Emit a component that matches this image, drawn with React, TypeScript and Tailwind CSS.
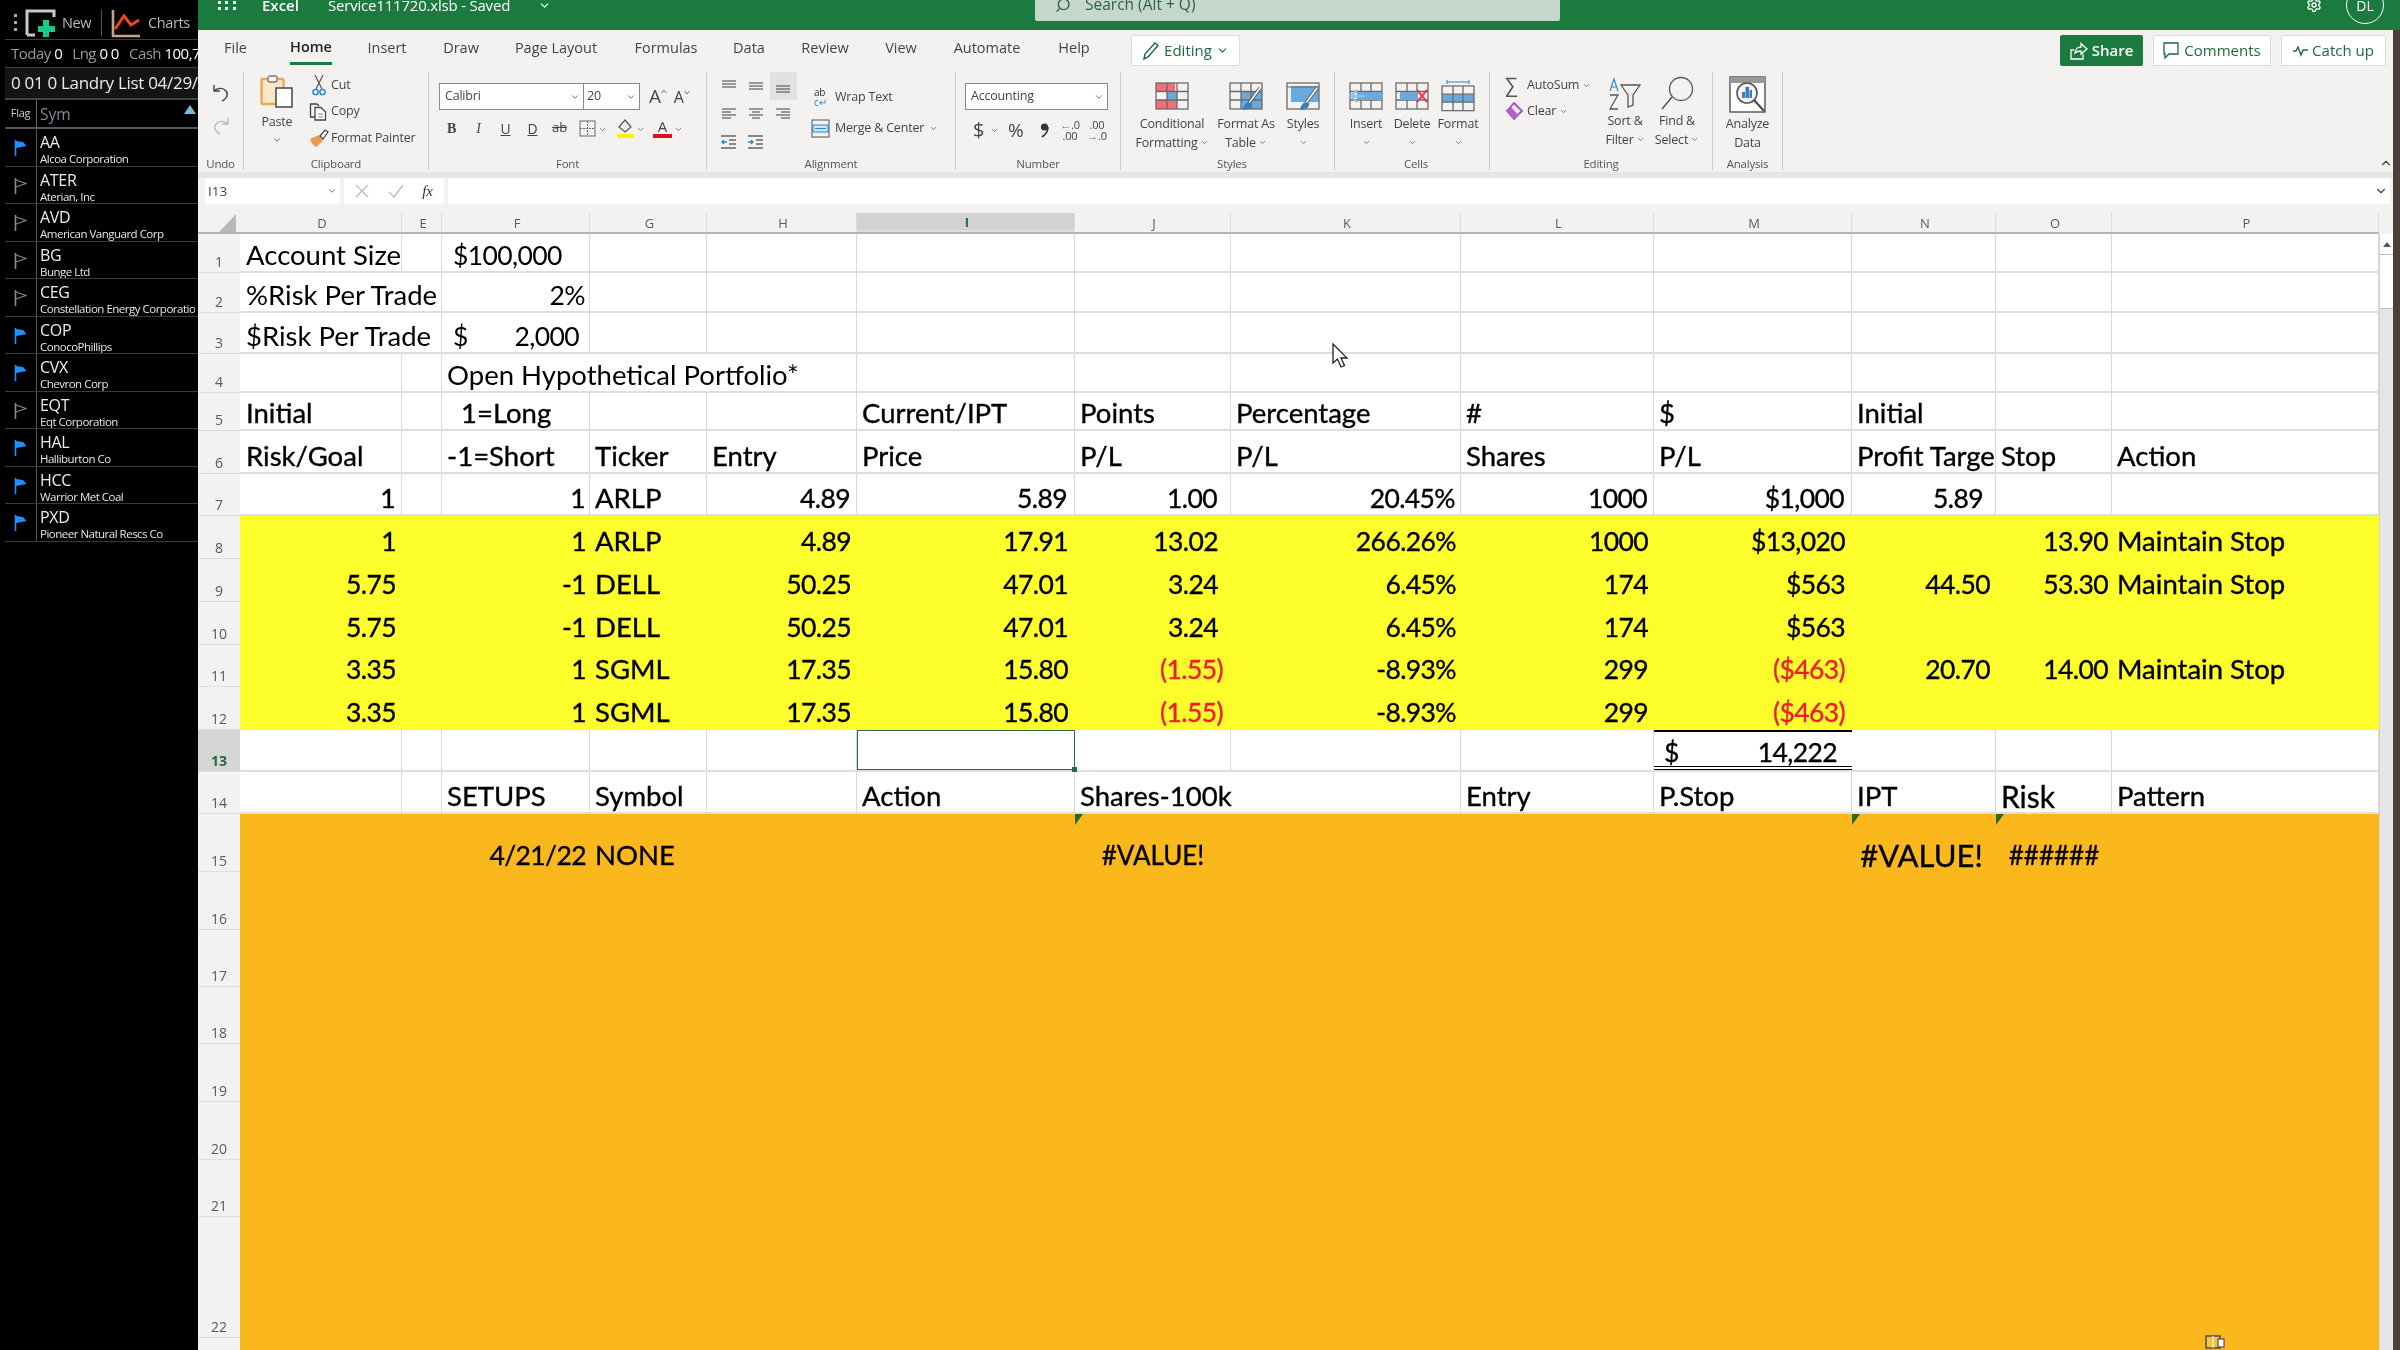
import React from "react";
import { ChevronDown, ChevronUp, Search, Settings } from "lucide-react";

const GRID = "grid grid-cols-[162px_40px_148px_117px_150px_218px_156px_230px_193px_198px_144px_116px_267px]";
const LETTERS = ["D", "E", "F", "G", "H", "I", "J", "K", "L", "M", "N", "O", "P"];
const RPAD = ["pr-[6px]", "pr-[4px]", "pr-[4px]", "pr-[4px]", "pr-[6px]", "pr-[7px]", "pr-[13px]", "pr-[5px]", "pr-[6px]", "pr-[7px]", "pr-[6px]", "pr-[4px]", "pr-[4px]"];

type Row = { n: number; h: string; bg: string; cells: React.ReactNode[]; open?: number[]; bold?: boolean; line?: boolean };

const Chev = ({ s = 10, c = "text-[#555]" }: { s?: number; c?: string }) => <ChevronDown size={s} strokeWidth={2} className={`inline-block shrink-0 ${c}`} />;

const NUM = "text-[26.5px] tracking-[-0.6px]";

const rows: Row[] = [
  { n: 1, h: "h-[39px]", bg: "bg-white", line: true, cells: ["Account Size", "", <span className={`ml-[6px] ${NUM}`}>$100,000</span>] },
  { n: 2, h: "h-[40px]", bg: "bg-white", line: true, open: [0], cells: ["%Risk Per Trade", "", "r:2%"] },
  { n: 3, h: "h-[41px]", bg: "bg-white", line: true, open: [0], cells: ["$Risk Per Trade", "", <span className={`flex justify-between w-[126px] ml-[6px] ${NUM}`}><span>$</span><span>2,000</span></span>] },
  { n: 4, h: "h-[39px]", bg: "bg-white", line: true, open: [2, 3], cells: ["", "", "Open Hypothetical Portfolio*"] },
  { n: 5, h: "h-[38px]", bg: "bg-white", bold: true, line: true, cells: ["Initial", "", <span className="ml-[14px]">1=Long</span>, "", "", "Current/IPT", "Points", "Percentage", "#", "$", "Initial"] },
  { n: 6, h: "h-[43px]", bg: "bg-white", bold: true, line: true, cells: ["Risk/Goal", "", "-1=Short", "Ticker", "Entry", "Price", "P/L", "P/L", "Shares", "P/L", <span className="block w-[139px] overflow-hidden">Profit Target</span>, "Stop", "Action"] },
  { n: 7, h: "h-[42px]", bg: "bg-white", bold: true, line: true, cells: ["r:1", "", "r:1", "ARLP", "r:4.89", "r:5.89", "r:1.00", "r:20.45%", "r:1000", "r:$1,000", <span className={`block w-full text-right pr-[12px] ${NUM}`}>5.89</span>] },
  { n: 8, h: "h-[43px]", bg: "bg-[#fdfd2b]", bold: true, cells: ["r:1", "", "r:1", "ARLP", "r:4.89", "r:17.91", "r:13.02", "r:266.26%", "r:1000", "r:$13,020", "", "r:13.90", "Maintain Stop"] },
  { n: 9, h: "h-[43px]", bg: "bg-[#fdfd2b]", bold: true, cells: ["r:5.75", "", "r:-1", "DELL", "r:50.25", "r:47.01", "r:3.24", "r:6.45%", "r:174", "r:$563", "r:44.50", "r:53.30", "Maintain Stop"] },
  { n: 10, h: "h-[43px]", bg: "bg-[#fdfd2b]", bold: true, cells: ["r:5.75", "", "r:-1", "DELL", "r:50.25", "r:47.01", "r:3.24", "r:6.45%", "r:174", "r:$563"] },
  { n: 11, h: "h-[42px]", bg: "bg-[#fdfd2b]", bold: true, cells: ["r:3.35", "", "r:1", "SGML", "r:17.35", "r:15.80", "r:(1.55)", "r:-8.93%", "r:299", "r:($463)", "r:20.70", "r:14.00", "Maintain Stop"] },
  { n: 12, h: "h-[43px]", bg: "bg-[#fdfd2b]", bold: true, cells: ["r:3.35", "", "r:1", "SGML", "r:17.35", "r:15.80", "r:(1.55)", "r:-8.93%", "r:299", "r:($463)"] },
  { n: 13, h: "h-[42px]", bg: "bg-white", bold: true, line: true, cells: [] },
  { n: 14, h: "h-[42px]", bg: "bg-white", bold: true, line: true, open: [6], cells: ["", "", "SETUPS", "Symbol", "", "Action", "Shares-100k", "", "Entry", "P.Stop", "IPT", <span className="text-[30px]">Risk</span>, "Pattern"] },
  { n: 15, h: "h-[58px]", bg: "bg-[#fbb81c]", bold: true, cells: ["", "", "r:4/21/22", "NONE", "", "", "c:#VALUE!", "", "", "", <span className="w-full text-center text-[31px] -ml-[5px]">#VALUE!</span>, "c:######"] },
  { n: 16, h: "h-[58px]", bg: "bg-[#fbb81c]", cells: [] },
  { n: 17, h: "h-[57px]", bg: "bg-[#fbb81c]", cells: [] },
  { n: 18, h: "h-[57px]", bg: "bg-[#fbb81c]", cells: [] },
  { n: 19, h: "h-[58px]", bg: "bg-[#fbb81c]", cells: [] },
  { n: 20, h: "h-[58px]", bg: "bg-[#fbb81c]", cells: [] },
  { n: 21, h: "h-[57px]", bg: "bg-[#fbb81c]", cells: [] },
  { n: 22, h: "h-[121px]", bg: "bg-[#fbb81c]", cells: [] },
  { n: 23, h: "h-[60px]", bg: "bg-[#fbb81c]", cells: [] },
];

function Cell({ v, i, row }: { v: React.ReactNode; i: number; row: Row }) {
  const open = row.open?.includes(i);
  const rule = row.line && !open ? "border-r border-[#d9d9d9]" : "";
  const tri = row.n === 15 && (i === 6 || i === 10 || i === 11);
  const pb = row.line ? "pb-0" : row.n === 15 ? "pb-[1px]" : "pb-[2px]";
  let inner: React.ReactNode = v;
  let align = i === 0 ? "justify-start pl-[6px]" : "justify-start pl-[5px]";
  let color = "text-black";
  if (typeof v === "string") {
    if (v.startsWith("r:")) {
      inner = <span className={NUM}>{v.slice(2)}</span>;
      let pad = RPAD[i];
      if (v.includes("(")) {
        color = "text-[#ee1c25]";
        if (i === 6) pad = "pr-[8px]";
      }
      align = `justify-end ${pad}`;
    } else if (v.startsWith("c:")) {
      inner = <span className="text-[26px]">{v.slice(2)}</span>;
      align = "justify-center";
    }
  }
  if (row.n === 13 && i === 5) {
    return <div className="relative border border-[#2c6b4a] bg-white"><span className="absolute -right-[3px] -bottom-[3px] w-[5px] h-[5px] bg-[#2c6b4a]" /></div>;
  }
  if (row.n === 13 && i === 9) {
    return <div className={`flex items-end justify-between pl-[10px] pr-[15px] border-t-2 border-b-[4px] border-double border-black border-t-black whitespace-nowrap leading-[28px] ${NUM}`}><span>$</span><span>14,222</span></div>;
  }
  return (
    <div className={`relative flex items-end ${pb} whitespace-nowrap ${align} ${rule} ${color}`}>
      {tri && <svg className="absolute left-0 top-0" width="8" height="11" viewBox="0 0 8 11"><path d="M0 0H8L0 11Z" fill="#2b6a1e" /></svg>}
      {inner}
    </div>
  );
}

function SheetRow({ row }: { row: Row }) {
  const cells = Array.from({ length: 13 }, (_, i) => row.cells[i] ?? "");
  const stroke = row.bold ? "[-webkit-text-stroke:0.35px_currentColor]" : "";
  return (
    <div className={`flex ${row.h}`}>
      <div className={`w-[42px] shrink-0 flex items-end justify-center pb-0 border-b border-[#dedede] text-[14px] font-['Open_Sans',sans-serif] ${row.n === 13 ? "bg-[#d6d6d6] font-bold text-[#1f6b3e]" : "bg-[#f3f2f1] text-[#5a5a5a]"}`}>{row.n}</div>
      <div className={`${GRID} w-[2139px] ${row.bg} ${stroke} ${row.line ? "border-b-2 border-[#dedede]" : ""} font-['Lato',sans-serif] text-[27.5px] leading-[32px]`}>
        {cells.map((v, i) => <Cell key={i} v={v} i={i} row={row} />)}
      </div>
    </div>
  );
}

const Tile = ({ children, w = 34, h = 28 }: { children?: React.ReactNode; w?: number; h?: number }) => (
  <svg width={w} height={h} viewBox={`0 0 34 ${h}`} fill="none">{children}</svg>
);
const GridLines = () => (
  <g stroke="#6a6a6a" strokeWidth="1.3" fill="none">
    <rect x="1" y="1" width="32" height="26" />
    <path d="M12 1V27M22 1V27M1 9.5H33M1 18H33" />
  </g>
);
const Brush = () => (
  <g>
    <path d="M31 6 L20 21" stroke="#555" strokeWidth="3.4" />
    <path d="M31 6 L20 21" stroke="#fff" strokeWidth="1.6" />
    <path d="M14 28 C15 21 19 19 23 21 C24 25 20 28 14 28Z" fill="#3a7fbd" />
  </g>
);

function Clipboard() {
  return (
    <svg width="34" height="34" viewBox="0 0 34 34" fill="none">
      <rect x="1.5" y="5" width="22" height="25" rx="1" stroke="#e8a85a" strokeWidth="2.4" fill="#fbe6c8" />
      <rect x="8" y="2" width="9" height="6" rx="2" stroke="#777" strokeWidth="1.3" fill="#fff" />
      <rect x="16" y="14" width="16" height="19" fill="#fff" stroke="#444" strokeWidth="1.5" />
    </svg>
  );
}
const Scissors = () => (
  <svg width="14" height="22" viewBox="0 0 14 22" fill="none">
    <path d="M3 1 L10 15M11 1 L4 15" stroke="#555" strokeWidth="1.2" />
    <circle cx="3.5" cy="18" r="2.6" stroke="#2f86c9" strokeWidth="1.5" />
    <circle cx="10.5" cy="18" r="2.6" stroke="#2f86c9" strokeWidth="1.5" />
  </svg>
);
const CopyIcon = () => (
  <svg width="18" height="18" viewBox="0 0 18 18" fill="none">
    <path d="M9 14H1.5V1H8L10 3" stroke="#444" strokeWidth="1.3" />
    <path d="M6 4.5H12L16.5 9V17H6Z" stroke="#444" strokeWidth="1.3" fill="#fff" />
    <path d="M9 11H14M9 14H14" stroke="#888" />
  </svg>
);
const PainterIcon = () => (
  <svg width="20" height="20" viewBox="0 0 20 20" fill="none">
    <path d="M1 11 L10 7 L14 13 L7 19 C5 18 2 15 1 11Z" fill="#ec9a4e" />
    <path d="M11 8 L16 2 L19 4 L14 11Z" fill="#fff" stroke="#444" strokeWidth="1.2" />
  </svg>
);

function AlignI({ k }: { k: string }) {
  const sets: Record<string, [number, number, number][]> = {
    top: [[1, 15, 2], [1, 15, 5], [1, 15, 8]],
    mid: [[1, 15, 4], [1, 15, 7], [1, 15, 10]],
    bot: [[1, 15, 7], [1, 15, 10], [1, 15, 13]],
    l: [[1, 15, 2], [1, 10, 5], [1, 15, 8], [1, 10, 11]],
    c: [[1, 15, 2], [4, 12, 5], [1, 15, 8], [4, 12, 11]],
    r: [[1, 15, 2], [6, 15, 5], [1, 15, 8], [6, 15, 11]],
  };
  return (
    <svg width="16" height="15" viewBox="0 0 16 15" stroke="#666" strokeWidth="1.3">
      {sets[k].map(([a, b, y], i) => <path key={i} d={`M${a} ${y}H${b}`} />)}
    </svg>
  );
}
function IndentI({ dir }: { dir: number }) {
  return (
    <svg width="17" height="16" viewBox="0 0 17 16" fill="none">
      <path d="M1 2H16M9 6H16M9 10H16M1 14H16" stroke="#666" strokeWidth="1.3" />
      <path d={dir > 0 ? "M7 8H2M4 6L2 8L4 10" : "M1 8H6M4 6L6 8L4 10"} stroke="#2f86c9" strokeWidth="1.3" />
    </svg>
  );
}

function Big({ icon, lines, w, top = "pt-[6px]" }: { icon: React.ReactNode; lines: React.ReactNode[]; w: string; top?: string }) {
  return (
    <div className={`flex flex-col items-center ${w} ${top}`}>
      <div className="h-[36px] flex items-center justify-center">{icon}</div>
      {lines.map((l, i) => <div key={i} className="h-[19px] leading-[19px] whitespace-nowrap flex items-center gap-[2px]">{l}</div>)}
    </div>
  );
}

function Group({ cls, label, children }: { cls: string; label: string; children: React.ReactNode }) {
  return (
    <div className={`flex flex-col shrink-0 h-[98px] my-[2px] border-r border-[#cdcdcd] ${cls}`}>
      <div className="flex-1 flex min-h-0">{children}</div>
      <div className="h-[14px] leading-[16px] text-center text-[11.5px] text-[#555]">{label}</div>
    </div>
  );
}

const tabs: [string, string][] = [["File", "w-[75px]"], ["Home", "w-[76px]"], ["Insert", "w-[76px]"], ["Draw", "w-[72px]"], ["Page Layout", "w-[118px]"], ["Formulas", "w-[102px]"], ["Data", "w-[64px]"], ["Review", "w-[88px]"], ["View", "w-[64px]"], ["Automate", "w-[108px]"], ["Help", "w-[66px]"]];

const syms: [string, string, boolean][] = [
  ["AA", "Alcoa Corporation", true], ["ATER", "Aterian, Inc", false], ["AVD", "American Vanguard Corp", false], ["BG", "Bunge Ltd", false],
  ["CEG", "Constellation Energy Corporatio", false], ["COP", "ConocoPhillips", true], ["CVX", "Chevron Corp", true], ["EQT", "Eqt Corporation", false],
  ["HAL", "Halliburton Co", true], ["HCC", "Warrior Met Coal", true], ["PXD", "Pioneer Natural Rescs Co", true],
];

function Flag({ on }: { on: boolean }) {
  return (
    <svg width="13" height="18" viewBox="0 0 13 18" fill="none">
      <path d="M1.5 1V17" stroke={on ? "#1e90ff" : "#8a8a8a"} strokeWidth="1.6" />
      {on ? <path d="M2 2 L9 3 L12.5 7 L2 9Z" fill="#1e90ff" /> : <path d="M2 3 L12 6.5 L2 10" stroke="#8a8a8a" strokeWidth="1.2" />}
    </svg>
  );
}

function Sidebar() {
  return (
    <aside className="w-[198px] shrink-0 h-full bg-black text-white pl-[5px] font-['Open_Sans',sans-serif] overflow-hidden">
      <div className="h-[40px] flex items-center border-b border-[#3c3c3c] pt-[6px]">
        <div className="w-[20px] flex flex-col items-center gap-[4px]">
          <span className="w-[3px] h-[3px] bg-[#aaa]" /><span className="w-[3px] h-[3px] bg-[#aaa]" /><span className="w-[3px] h-[3px] bg-[#aaa]" />
        </div>
        <svg width="32" height="30" viewBox="0 0 32 30" fill="none">
          <path d="M2 27V3H29V9" stroke="#c9c9c9" strokeWidth="3" />
          <path d="M2 27H10" stroke="#c9c9c9" strokeWidth="3" />
          <path d="M21 12V29M13 21H30" stroke="#19c98a" strokeWidth="6" />
        </svg>
        <span className="ml-[5px] text-[14.5px] tracking-[-0.4px] text-[#b9b9b9]">New</span>
        <span className="ml-[10px] w-px h-[26px] bg-[#555]" />
        <svg className="ml-[9px]" width="30" height="30" viewBox="0 0 30 30" fill="none">
          <path d="M2 2V28H29" stroke="#c9a089" strokeWidth="2.6" />
          <path d="M4 21 L13 8 L20 17 L28 12" stroke="#e8481c" strokeWidth="3" />
        </svg>
        <span className="ml-[7px] text-[14.5px] tracking-[-0.4px] text-[#b9b9b9]">Charts</span>
      </div>
      <div className="h-[28px] flex items-center gap-[10px] pl-[6px] border-b border-[#3c3c3c] whitespace-nowrap text-[15px] tracking-[-0.5px] text-[#9a9a9a]">
        <span>Today <span className="text-white">0</span></span><span>Lng <span className="text-white">0 0</span></span><span>Cash <span className="text-white">100,7</span></span>
      </div>
      <div className="h-[32px] flex items-center pl-[6px] bg-[#141414] border-b-2 border-[#444] whitespace-nowrap text-[17px] tracking-[-0.3px] text-[#ececec]">0 01 0 Landry List 04/29/</div>
      <div className="relative flex h-[29px] border-b-2 border-[#555]">
        <div className="w-[32px] flex items-center justify-center border-r border-[#666] text-[11px] tracking-[-0.3px] text-[#ccc]">Flag</div>
        <div className="pl-[3px] leading-[29px] text-[15.5px] text-[#7f8d9c]">Sym</div>
        <svg className="absolute right-[2px] top-[5px]" width="12" height="9" viewBox="0 0 12 9"><path d="M6 0L12 9H0Z" fill="#7fb9d6" /></svg>
      </div>
      {syms.map(([s, n, on]) => (
        <div key={s} className="flex h-[37.5px] border-b border-[#3a3a3a]">
          <div className="w-[32px] flex items-center justify-center border-r border-[#555] pt-[2px]"><Flag on={on} /></div>
          <div className="pl-[3px] pt-[4px] whitespace-nowrap overflow-hidden">
            <div className="text-[16px] leading-[19px] tracking-[-0.3px] text-[#eee]">{s}</div>
            <div className="text-[11.5px] leading-[13px] tracking-[-0.5px] text-[#e6e6e6]">{n}</div>
          </div>
        </div>
      ))}
    </aside>
  );
}

function TitleBar() {
  return (
    <header className="h-[30px] bg-[#1b7a3e] overflow-hidden text-white font-['Open_Sans',sans-serif] text-[15px]">
      <div className="h-[10px] flex items-center overflow-visible">
        <div className="ml-[20px] grid grid-cols-3 gap-x-[4px] gap-y-[3px] w-[18px]">
          {Array.from({ length: 6 }, (_, i) => <span key={i} className="w-[3px] h-[3px] bg-white" />)}
        </div>
        <span className="ml-[26px] w-[40px] font-semibold">Excel</span>
        <span className="ml-[26px] w-[192px] whitespace-nowrap tracking-[-0.2px]">Service111720.xlsb - Saved</span>
        <ChevronDown size={13} className="ml-[18px]" />
        <div className="ml-[484px] w-[525px] h-[21px] self-start bg-[#c5d8cb] rounded-b-[2px] text-[#2f5f45] overflow-visible">
          <div className="h-[10px] flex items-center pl-[20px] gap-[14px] text-[15.5px]"><Search size={16} className="-scale-x-100" /><span>Search (Alt + Q)</span></div>
        </div>
        <Settings size={16} className="ml-[746px]" />
        <div className="ml-[24px] w-[38px] h-[38px] shrink-0 rounded-full border border-white flex items-center justify-center text-[14px]">DL</div>
      </div>
    </header>
  );
}

function Tabs() {
  return (
    <div className="h-[40px] flex items-start bg-[#f3f2f1] text-[14.5px] text-[#444]">
      {tabs.map(([t, w]) => (
        <div key={t} className={`${w} flex justify-center`}>
          <span className={`h-[35px] pt-[1px] flex items-center ${t === "Home" ? "border-b-[3px] border-[#1b7a3e] font-semibold text-[#222]" : ""}`}>{t}</span>
        </div>
      ))}
      <div className="ml-[24px] mt-[5px] w-[109px] h-[31px] flex items-center justify-center gap-[4px] bg-white border border-[#dcdcdc] rounded-[2px] text-[#1b6b3e] text-[15px]">
        <svg width="18" height="20" viewBox="0 0 18 20" fill="none"><path d="M2 18 L3 13 L13 2 L16 4.5 L6 16Z" stroke="#1b6b3e" strokeWidth="1.4" /></svg>
        Editing <Chev s={13} c="text-[#1b6b3e]" />
      </div>
      <div className="ml-auto mr-[7px] mt-[5px] flex gap-[10px] text-[15px] font-semibold text-[#1b6b3e]">
        <div className="w-[83px] h-[31px] flex items-center justify-center gap-[4px] bg-[#1b7a3e] rounded-[2px] text-white">
          <svg width="18" height="18" viewBox="0 0 18 18" fill="none" stroke="#fff" strokeWidth="1.3"><path d="M4 8H1V17H13V12" /><path d="M5 11 C5 7 8 5 11 5V1.5L17 7 L11 12V9C8 9 6 10 5 11Z" /></svg>
          Share
        </div>
        <div className="w-[118px] h-[31px] flex items-center justify-center gap-[5px] bg-white border border-[#dcdcdc] rounded-[2px] font-normal">
          <svg width="16" height="18" viewBox="0 0 16 18" fill="none" stroke="#1b6b3e" strokeWidth="1.3"><path d="M1 1H15V12H6L2 16V12H1Z" /></svg>
          Comments
        </div>
        <div className="w-[105px] h-[31px] flex items-center justify-center gap-[3px] bg-white border border-[#dcdcdc] rounded-[2px] font-normal">
          <svg width="16" height="12" viewBox="0 0 16 12" fill="none" stroke="#1b6b3e" strokeWidth="1.4"><path d="M0 6H3L5 2L8 10L10 5H15" /></svg>
          Catch up
        </div>
      </div>
    </div>
  );
}

function Ribbon() {
  return (
    <div className="h-[102px] flex bg-[#f3f2f1] text-[12.5px] text-[#444] font-['Open_Sans',sans-serif] tracking-[-0.2px] relative">
      <Group cls="w-[46px]" label="Undo">
        <div className="flex flex-col items-center w-full pt-[11px] gap-[13px]">
          <svg width="20" height="20" viewBox="0 0 20 20" fill="none" stroke="#444" strokeWidth="1.4"><path d="M3 2V8H9M3 8C6 5 12 4 15 8C18 12 15 16 11 18" /></svg>
          <svg width="20" height="20" viewBox="0 0 20 20" fill="none" stroke="#bbb" strokeWidth="1.4"><path d="M17 2V8H11M17 8C14 5 8 4 5 8C2 12 5 16 9 18" /></svg>
        </div>
      </Group>
      <Group cls="w-[185px]" label="Clipboard">
        <div className="ml-[14px] w-[38px] flex flex-col items-center pt-[2px]">
          <Clipboard />
          <span className="mt-[5px]">Paste</span>
          <Chev c="text-[#444] mt-[3px]" />
        </div>
        <div className="ml-[13px] flex flex-col">
          <div className="h-[26.5px] flex items-center"><span className="w-[22px] pl-[3px]"><Scissors /></span>Cut</div>
          <div className="h-[26.5px] flex items-center"><span className="w-[22px]"><CopyIcon /></span>Copy</div>
          <div className="h-[26.5px] flex items-center"><span className="w-[22px]"><PainterIcon /></span>Format Painter</div>
        </div>
      </Group>
      <Group cls="w-[278px]" label="Font">
        <div className="pl-[10px] pt-[11px]">
          <div className="flex items-center">
            <div className="w-[201px] h-[27px] flex bg-white border border-[#8a8a8a] font-normal">
              <div className="w-[144px] flex items-center justify-between pl-[5px] pr-[3px] border-r border-[#8a8a8a]">Calibri<Chev /></div>
              <div className="flex-1 flex items-center justify-between pl-[3px] pr-[3px]">20<Chev /></div>
            </div>
            <span className="ml-[9px] text-[19px] leading-none">A</span>
            <svg className="mb-[10px]" width="6" height="5" viewBox="0 0 6 5" fill="none" stroke="#2f86c9"><path d="M0.5 4L3 1L5.5 4" /></svg>
            <span className="ml-[7px] text-[16px] leading-none">A</span>
            <svg className="mb-[8px]" width="6" height="5" viewBox="0 0 6 5" fill="none" stroke="#2f86c9"><path d="M0.5 1L3 4L5.5 1" /></svg>
          </div>
          <div className="flex items-center h-[20px] mt-[8px] -ml-[1px] text-[14px] text-[#444]">
            <span className="w-[27px] text-center font-bold font-['Liberation_Serif',serif]">B</span>
            <span className="w-[27px] text-center italic font-['Liberation_Serif',serif]">I</span>
            <span className="w-[27px] text-center underline">U</span>
            <span className="w-[27px] text-center underline">D</span>
            <span className="w-[27px] text-center line-through text-[13px]">ab</span>
            <svg className="ml-[6px]" width="17" height="17" viewBox="0 0 17 17" fill="none" stroke="#666"><rect x="1" y="1" width="15" height="15" /><path d="M8.5 1V16M1 8.5H16" strokeDasharray="2 1" /></svg>
            <span className="ml-[2px] w-[16px]"><Chev s={9} /></span>
            <svg className="ml-[3px]" width="17" height="19" viewBox="0 0 17 19" fill="none"><path d="M8 1L14 8L8 13L2 8Z" stroke="#555" strokeWidth="1.2" /><rect y="15" width="17" height="4" fill="#fdf000" /></svg>
            <span className="ml-[2px] w-[16px]"><Chev s={9} /></span>
            <span className="ml-[1px] flex flex-col items-center w-[19px] leading-[15px] text-[15px]">A<span className="w-[19px] h-[4px] bg-[#e0101c]" /></span>
            <span className="ml-[2px]"><Chev s={9} /></span>
          </div>
        </div>
      </Group>
      <Group cls="w-[249px]" label="Alignment">
        <div className="ml-[8px] w-[82px] grid grid-cols-3 grid-rows-[28px_28px_28px] place-items-center">
          <AlignI k="top" /><AlignI k="mid" /><div className="w-full h-full bg-[#e1e1e1] flex items-center justify-center"><AlignI k="bot" /></div>
          <AlignI k="l" /><AlignI k="c" /><AlignI k="r" />
          <IndentI dir={1} /><IndentI dir={-1} /><span />
        </div>
        <div className="ml-[14px] pt-[12px] flex flex-col gap-[5px] whitespace-nowrap">
          <div className="h-[26px] flex items-center gap-[5px] pl-[3px]">
            <span className="w-[16px] text-[10px] leading-[10px] text-[#333]">ab<br /><span className="text-[#2f86c9]">c↵</span></span>Wrap Text
          </div>
          <div className="h-[26px] flex items-center gap-[5px]">
            <svg width="19" height="19" viewBox="0 0 19 19" fill="none"><rect x="1" y="1" width="17" height="17" stroke="#555" /><rect x="2" y="6" width="15" height="7" fill="#cfe4f5" stroke="#2f86c9" /><path d="M4 9.5H15" stroke="#2f86c9" /></svg>
            Merge &amp; Center <Chev s={9} />
          </div>
        </div>
      </Group>
      <Group cls="w-[165px]" label="Number">
        <div className="pl-[9px] pt-[11px]">
          <div className="w-[143px] h-[27px] flex items-center justify-between bg-white border border-[#8a8a8a] pl-[5px] pr-[3px]">Accounting<Chev /></div>
          <div className="flex items-center h-[24px] mt-[8px] text-[#444]">
            <span className="w-[16px] ml-[8px] text-[20px]">$</span>
            <Chev s={9} c="text-[#555] ml-[1px]" />
            <span className="ml-[9px] w-[22px] text-[19px]">%</span>
            <svg className="ml-[10px]" width="9" height="16" viewBox="0 0 9 16"><circle cx="4.5" cy="5" r="3.6" fill="#333" /><path d="M8 5C8 10 5 13 2 15" stroke="#333" strokeWidth="1.6" fill="none" /></svg>
            <span className="ml-[11px] w-[20px] text-[11px] leading-[11px] text-center"><span className="text-[#2f86c9]">←</span>.0<br />.00</span>
            <span className="ml-[7px] w-[20px] text-[11px] leading-[11px] text-center">.00<br /><span className="text-[#2f86c9]">→</span>.0</span>
          </div>
        </div>
      </Group>
      <Group cls="w-[214px] pl-[9px]" label="Styles">
        <Big w="w-[84px]" icon={<Tile><rect x="1" y="1" width="19" height="8" fill="#f36d7d" /><rect x="12" y="9.5" width="10" height="8" fill="#6aa9dd" /><rect x="1" y="18" width="21" height="9" fill="#f36d7d" /><GridLines /></Tile>} lines={["Conditional", <>Formatting <Chev s={9} /></>]} />
        <Big w="w-[64px]" icon={<Tile><rect x="12" y="9" width="21" height="18" fill="#6aa9dd" /><GridLines /><Brush /></Tile>} lines={["Format As", <>Table <Chev s={9} /></>]} />
        <Big w="w-[50px]" icon={<Tile><rect x="5" y="4" width="28" height="16" fill="#6aa9dd" /><rect x="1" y="1" width="32" height="26" stroke="#6a6a6a" strokeWidth="1.3" /><path d="M1 5H33" stroke="#6a6a6a" /><Brush /></Tile>} lines={["Styles", <Chev s={9} />]} />
      </Group>
      <Group cls="w-[155px] pl-[8px]" label="Cells">
        <Big w="w-[46px]" icon={<Tile><GridLines /><rect x="8" y="10" width="25" height="8" fill="#6aa9dd" /><path d="M15 14H3M8 8L2 14L8 20" stroke="#8fc1ea" strokeWidth="2.4" fill="none" /></Tile>} lines={["Insert", <Chev s={9} />]} />
        <Big w="w-[46px]" icon={<Tile><GridLines /><rect x="5" y="10" width="18" height="8" fill="#6aa9dd" /><path d="M22 8L32 20M32 8L22 20" stroke="#ee3a4b" strokeWidth="2" /></Tile>} lines={["Delete", <Chev s={9} />]} />
        <Big w="w-[46px]" icon={<Tile h={32}><g transform="translate(0,5) scale(1,0.95)"><rect x="1" y="10" width="32" height="8" fill="#6aa9dd" /><GridLines /></g><path d="M6 2H28M6 0V4M28 0V4" stroke="#3a7fbd" /></Tile>} lines={["Format", <Chev s={9} />]} />
      </Group>
      <Group cls="w-[223px]" label="Editing">
        <div className="ml-[15px] w-[94px] flex flex-col whitespace-nowrap">
          <div className="h-[26px] flex items-center gap-[3px]">
            <span className="w-[19px] text-[20px] leading-none text-[#555]">∑</span>AutoSum<Chev s={9} />
          </div>
          <div className="h-[26px] flex items-center gap-[3px]">
            <svg className="w-[19px]" width="19" height="19" viewBox="0 0 19 19" fill="none"><path d="M9 1L17 9L9 17L2 9Z" stroke="#a94fc4" strokeWidth="1.8" fill="#f3e3f8" /><path d="M2 9L6 5L13 13L9 17Z" fill="#b45cd0" /></svg>
            Clear <Chev s={9} />
          </div>
        </div>
        <Big w="w-[52px]" top="pt-[3px]" icon={<svg width="34" height="33" viewBox="0 0 34 33" fill="none"><path d="M2 14L6 2L10 14M3.5 10H8.5" stroke="#2f86c9" strokeWidth="1.2" /><path d="M2 18H10L2 32H10" stroke="#555" strokeWidth="1.3" /><path d="M13 8H32L25 18V28L20 30V18Z" stroke="#555" strokeWidth="1.3" /></svg>} lines={["Sort &", <>Filter <Chev s={9} /></>]} />
        <Big w="w-[52px]" top="pt-[3px]" icon={<svg width="34" height="34" viewBox="0 0 34 34" fill="none"><circle cx="21" cy="13" r="11.5" stroke="#555" strokeWidth="1.3" /><path d="M12 21L2 33" stroke="#555" strokeWidth="1.5" /></svg>} lines={["Find &", <>Select <Chev s={9} /></>]} />
      </Group>
      <Group cls="w-[70px]" label="Analysis">
        <div className="w-full flex flex-col items-center pt-[4px]">
          <svg width="37" height="37" viewBox="0 0 37 37" fill="none">
            <rect x="1" y="1" width="35" height="35" stroke="#444" strokeWidth="1.3" fill="#fff" />
            <rect x="1" y="1" width="35" height="6" fill="#999" />
            <circle cx="18" cy="17" r="10" stroke="#555" strokeWidth="1.6" fill="#f4f4f4" />
            <path d="M13 22V16H16V22ZM16.5 22V11H20V22ZM20.5 22V14H23V22Z" fill="#3a7fbd" />
            <path d="M25 24L35 35" stroke="#444" strokeWidth="2" />
          </svg>
          <div className="h-[19px] leading-[19px] mt-[1px]">Analyze</div>
          <div className="h-[19px] leading-[19px]">Data</div>
        </div>
      </Group>
      <ChevronUp size={14} className="absolute right-[0px] bottom-[2px] text-[#444]" />
    </div>
  );
}

function FormulaBar() {
  return (
    <div className="h-[41px] bg-[#f3f2f1] border-t-[6px] border-[#e6e5e4] pl-[7px] pr-[3px] flex gap-[4px] font-['Open_Sans',sans-serif] text-[13.5px] text-[#444]">
      <div className="w-[135px] h-[26px] bg-white flex items-center justify-between pl-[3px] pr-[3px]">I13<Chev s={10} /></div>
      <div className="w-[100px] h-[26px] bg-white flex items-center justify-between pl-[10px] pr-[11px] text-[#bbb]">
        <svg width="16" height="16" viewBox="0 0 16 16" stroke="#bbb" strokeWidth="1.3"><path d="M2 2L14 14M14 2L2 14" /></svg>
        <svg width="18" height="16" viewBox="0 0 18 16" fill="none" stroke="#bbb" strokeWidth="1.3"><path d="M2 9L7 14L16 2" /></svg>
        <span className="italic font-['Liberation_Serif',serif] text-[15px] text-[#333]">fx</span>
      </div>
      <div className="flex-1 h-[26px] bg-white flex items-center justify-end pr-[2px]"><Chev s={14} c="text-[#444]" /></div>
    </div>
  );
}

function ColHeaders() {
  return (
    <div className="flex h-[21px] bg-[#f3f2f1] border-b-2 border-[#b4b4b4] font-['Open_Sans',sans-serif] text-[13px] text-[#5a5a5a] w-[2181px]">
      <div className="w-[42px] flex items-start justify-end pr-[4px] pt-[1px]">
        <svg width="17" height="18" viewBox="0 0 17 18"><path d="M17 0V18H0Z" fill="#b9b9b9" /></svg>
      </div>
      <div className={`${GRID} w-[2139px]`}>
        {LETTERS.map((l) => (
          <div key={l} className={`flex items-center justify-center pl-[3px] pt-[1px] border-r border-[#dcdcdc] leading-none ${l === "I" ? "bg-[#d2d2d2] border-b-2 border-[#1f6b3e] text-[#1f6b3e] font-bold" : ""}`}>{l}</div>
        ))}
      </div>
    </div>
  );
}

function Scrollbar() {
  return (
    <div className="w-[14px] shrink-0 bg-[#e6e6e6] flex flex-col border-l border-[#d0d0d0]">
      <div className="h-[21px] bg-white flex items-center justify-center border-b border-[#bbb]">
        <svg width="8" height="5" viewBox="0 0 8 5"><path d="M4 0L8 5H0Z" fill="#555" /></svg>
      </div>
      <div className="h-[54px] bg-white border-b border-[#bbb]" />
    </div>
  );
}

export default function App() {
  return (
    <div className="relative flex w-[2400px] h-[1350px] overflow-hidden bg-black font-['Open_Sans',sans-serif] blur-[0.4px]">
      <Sidebar />
      <main className="w-[2195px] shrink-0 h-full flex flex-col bg-[#f3f2f1] overflow-hidden">
        <TitleBar />
        <Tabs />
        <Ribbon />
        <FormulaBar />
        <ColHeaders />
        <div className="flex flex-1 min-h-0">
          <div className="w-[2181px] shrink-0">
            {rows.map((r) => <SheetRow key={r.n} row={r} />)}
          </div>
          <Scrollbar />
        </div>
      </main>
      <div className="flex-1 bg-[#4b3f3c] border-t-[30px] border-[#1b7a3e]" />
      <svg className="absolute left-[1332px] top-[343px]" width="18" height="26" viewBox="0 0 18 26" fill="none">
        <path d="M1 1V20L5.5 16L9 24L12.5 22.5L9 15H15Z" fill="#fff" stroke="#222" strokeWidth="1.3" />
      </svg>
      <svg className="absolute left-[2205px] top-[1335px]" width="20" height="14" viewBox="0 0 20 14" fill="none">
        <rect x="1" y="1" width="14" height="12" fill="#f3c04a" stroke="#555" strokeWidth="1.6" />
        <path d="M8 1V13" stroke="#fff" />
        <rect x="13" y="4" width="6" height="8" fill="#fff" stroke="#334" />
      </svg>
    </div>
  );
}
